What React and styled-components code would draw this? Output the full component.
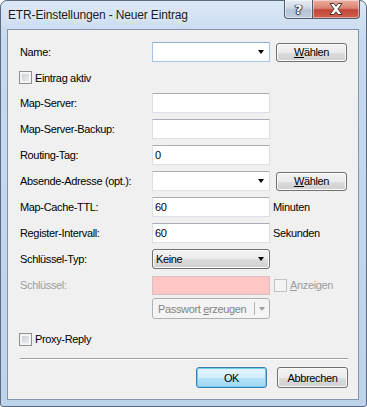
import React from "react";
import styled, { createGlobalStyle } from "styled-components";

const Global = createGlobalStyle`
  html, body { margin:0; padding:0; background:#fff; }
  * { box-sizing:border-box; }
`;

const Window = styled.div`
  width:367px;
  height:407px;
  display:flex;
  flex-direction:column;
  border:1px solid #5b6a80;
  border-radius:7px 7px 3px 3px;
  background:linear-gradient(#dbe7f5, #c6d9ef 40px, #bed3ec);
  padding:0 7px 6px 6px;
  font-family:"Liberation Sans", Arial, sans-serif;
`;

const TitleBar = styled.div`
  height:28px;
  display:flex;
  justify-content:space-between;
  align-items:flex-start;
`;

const Title = styled.div`
  padding:7px 0 0 1px;
  font-size:12px;
  letter-spacing:-0.15px;
  color:#1b1b1b;
  text-shadow:0 0 6px rgba(255,255,255,0.9);
`;

const CaptionButtons = styled.div`
  display:flex;
  margin-top:-1px;
  margin-right:-1px;
`;

const CaptionButton = styled.div`
  width:${p => p.$w}px;
  height:19px;
  display:flex;
  align-items:center;
  justify-content:center;
  border:1px solid #4f5d72;
  border-top:none;
  background:${p => p.$close
    ? "linear-gradient(#eaae9f, #db8473 45%, #c2463a 55%, #d0604c)"
    : "linear-gradient(#e6ecf3, #ced9e6 45%, #b5c3d4 55%, #bfcddd)"};
  border-radius:${p => p.$close ? "0 0 4px 0" : "0 0 0 4px"};
  border-left:${p => p.$close ? "none" : "1px solid #4f5d72"};
  box-shadow:inset 0 0 0 1px rgba(255,255,255,0.45);
  color:#fff;
  font-family:"DejaVu Sans", sans-serif;
  font-weight:bold;
  font-size:13px;
  text-shadow:0 0 1px #2b3440, 1px 0 1px #2b3440, -1px 0 1px #2b3440, 0 1px 1px #2b3440;
`;

const Client = styled.div`
  flex:1;
  display:flex;
  flex-direction:column;
  border:1px solid #8393a8;
  background:#f0f0f0;
  padding:12px 10px 0 12px;
  font-size:11px;
  letter-spacing:-0.35px;
  color:#000;
`;

const Row = styled.div`
  display:grid;
  grid-template-columns:132px 118px auto;
  align-items:center;
  height:${p => p.$h || 20}px;
  margin-top:${p => p.$mt ?? 6}px;
`;

const Label = styled.div`
  color:${p => p.$disabled ? "#9d9d9d" : "#000"};
  white-space:nowrap;
`;

const TextBox = styled.div`
  height:${p => p.$h || 20}px;
  border:1px solid #dbdfe6;
  border-top-color:#abadb3;
  background:${p => p.$pink ? "#ffc6c6" : "#fff"};
  ${p => p.$pink && "border-color:#d9c0c0;"}
  padding:0 2px;
  display:flex;
  align-items:center;
`;

const Combo = styled(TextBox)`
  justify-content:flex-end;
  padding-right:5px;
  ${p => p.$focus && "border-color:#a7c5e6; border-top-color:#8eafd4;"}
`;

const Arrow = styled.span`
  width:0;
  height:0;
  border-left:3.5px solid transparent;
  border-right:3.5px solid transparent;
  border-top:4px solid ${p => p.$grey ? "#a0a0a0" : "#000"};
`;

const Button = styled.div`
  height:${p => p.$h || 19}px;
  width:71px;
  margin-left:${p => p.$ml || 0}px;
  display:flex;
  align-items:center;
  justify-content:center;
  border:1px solid ${p => p.$default ? "#3c7fb1" : "#707070"};
  border-radius:3px;
  background:${p => p.$default
    ? "linear-gradient(#e5f4fc, #d2edfb 50%, #b6e2fa 50%, #a3d6f3)"
    : "linear-gradient(#f2f2f2, #ebebeb 50%, #dddddd 50%, #cfcfcf)"};
  box-shadow:inset 0 0 0 1px ${p => p.$default ? "#6fcdf4" : "#fbfbfb"};
  color:#000;
  font-size:11px;
`;

const DropList = styled.div`
  height:20px;
  display:flex;
  align-items:center;
  justify-content:space-between;
  padding:0 5px 0 3px;
  border:1px solid #707070;
  border-radius:3px;
  background:linear-gradient(#f2f2f2, #ebebeb 50%, #dddddd 50%, #cfcfcf);
  box-shadow:inset 0 0 0 1px #fbfbfb;
`;

const SplitButton = styled.div`
  height:21px;
  display:flex;
  align-items:stretch;
  border:1px solid #adb2b5;
  border-radius:3px;
  background:#f4f4f4;
  color:#838383;
`;

const SplitMain = styled.div`
  flex:1;
  display:flex;
  align-items:center;
  padding-left:5px;
  &::after {
    content:"";
    width:1px;
    margin:3px 0 3px auto;
    align-self:stretch;
    background:#adb2b5;
  }
`;

const SplitArrow = styled.div`
  width:14px;
  display:flex;
  align-items:center;
  justify-content:center;
`;

const Unit = styled.div`
  padding-left:3px;
`;

const CheckRow = styled.label`
  display:flex;
  align-items:center;
  gap:3px;
  margin-left:${p => p.$ml || -1}px;
  color:${p => p.$disabled ? "#9d9d9d" : "#000"};
`;

const Box = styled.span`
  width:13px;
  height:13px;
  border:1px solid ${p => p.$disabled ? "#c2c2c2" : "#8e8f8f"};
  background:${p => p.$disabled ? "#f4f4f4" : "linear-gradient(135deg, #c6cad0, #f1f2f3)"};
  box-shadow:inset 0 0 0 2px #f4f4f4;
`;

const Separator = styled.div`
  margin-top:9px;
  height:2px;
  border-top:1px solid #a0a0a0;
  border-bottom:1px solid #fff;
`;

const Footer = styled.div`
  display:flex;
  justify-content:flex-end;
  gap:10px;
  margin-top:7px;
`;

const Check = ({ children, disabled, ml }) => (
  <CheckRow $disabled={disabled} $ml={ml}>
    <Box $disabled={disabled} />
    <span>{children}</span>
  </CheckRow>
);

const CloseIcon = () => (
  <svg width="14" height="12" viewBox="0 0 14 12">
    <path d="M1 0.5 H4.8 L7 3.2 L9.2 0.5 H13 L9 6 L13 11.5 H9.2 L7 8.8 L4.8 11.5 H1 L5 6 Z"
      fill="#fff" stroke="#3a2a2a" strokeWidth="0.9" strokeLinejoin="round" />
  </svg>
);

export default function App() {
  return (
    <>
      <Global />
      <Window>
        <TitleBar>
          <Title>ETR-Einstellungen - Neuer Eintrag</Title>
          <CaptionButtons>
            <CaptionButton $w={29}>?</CaptionButton>
            <CaptionButton $w={47} $close><CloseIcon /></CaptionButton>
          </CaptionButtons>
        </TitleBar>
        <Client>
          <Row $mt={0}>
            <Label>Name:</Label>
            <Combo $focus><Arrow /></Combo>
            <Button $ml={6} $h={19}><u>W</u>ählen</Button>
          </Row>
          <Row $h={19}>
            <Check>Eintrag aktiv</Check>
          </Row>
          <Row>
            <Label>Map-Server:</Label>
            <TextBox />
          </Row>
          <Row>
            <Label>Map-Server-Backup:</Label>
            <TextBox />
          </Row>
          <Row>
            <Label>Routing-Tag:</Label>
            <TextBox>0</TextBox>
          </Row>
          <Row>
            <Label>Absende-Adresse (opt.):</Label>
            <Combo><Arrow /></Combo>
            <Button $ml={6}><u>W</u>ählen</Button>
          </Row>
          <Row>
            <Label>Map-Cache-TTL:</Label>
            <TextBox>60</TextBox>
            <Unit>Minuten</Unit>
          </Row>
          <Row>
            <Label>Register-Intervall:</Label>
            <TextBox>60</TextBox>
            <Unit>Sekunden</Unit>
          </Row>
          <Row>
            <Label>Schlüssel-Typ:</Label>
            <DropList><span>Keine</span><Arrow /></DropList>
          </Row>
          <Row>
            <Label $disabled>Schlüssel:</Label>
            <TextBox $pink $h={19} />
            <Check disabled ml={4}><u>A</u>nzeigen</Check>
          </Row>
          <Row $h={21} $mt={3}>
            <span />
            <SplitButton>
              <SplitMain>Passwort&nbsp;<u>e</u>rzeugen</SplitMain>
              <SplitArrow><Arrow $grey /></SplitArrow>
            </SplitButton>
          </Row>
          <Row $mt={10}>
            <Check>Proxy-Reply</Check>
          </Row>
          <Separator />
          <Footer>
            <Button $default $h={21}>OK</Button>
            <Button $h={21}>Abbrechen</Button>
          </Footer>
        </Client>
      </Window>
    </>
  );
}
